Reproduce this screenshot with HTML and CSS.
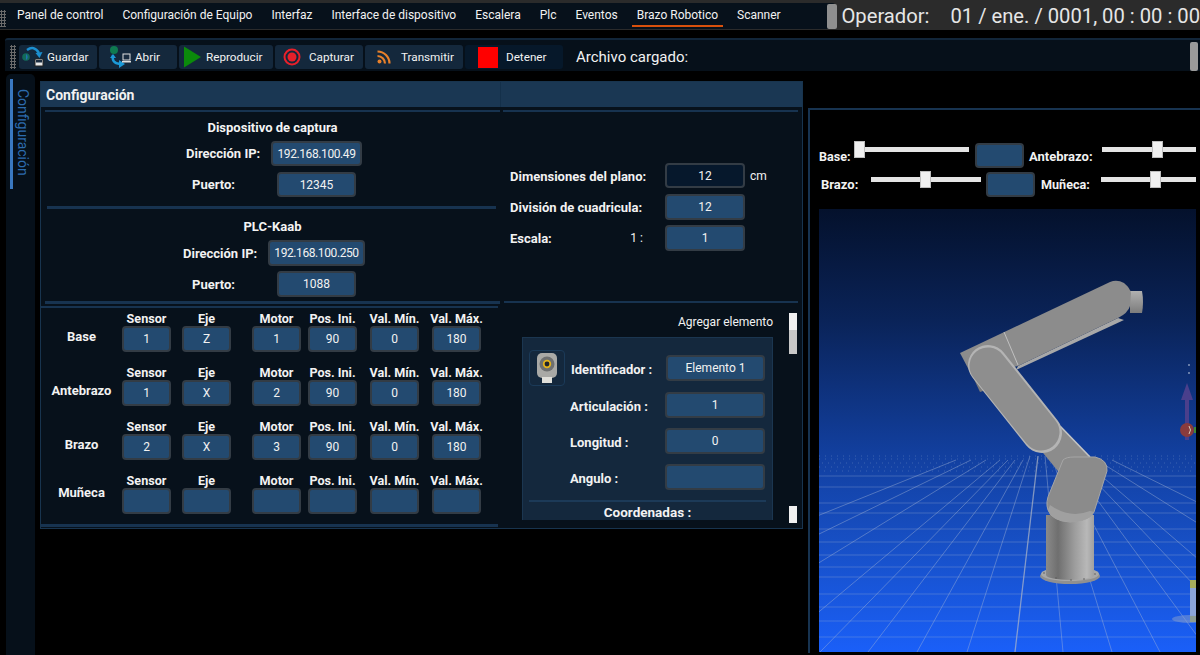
FILE: index.html
```html
<!DOCTYPE html>
<html lang="es">
<head>
<meta charset="utf-8">
<title>Brazo Robotico</title>
<link rel="stylesheet" href="styles.css">
</head>
<body>
<div class="app">
  <header class="topbar">
    <nav class="menu">
      <span class="grip grip-menu"></span>
      <a class="menu-item">Panel de control</a>
      <a class="menu-item">Configuración de Equipo</a>
      <a class="menu-item">Interfaz</a>
      <a class="menu-item">Interface de dispositivo</a>
      <a class="menu-item">Escalera</a>
      <a class="menu-item">Plc</a>
      <a class="menu-item">Eventos</a>
      <a class="menu-item active">Brazo Robotico</a>
      <a class="menu-item">Scanner</a>
      <span class="menu-thumb"></span>
    </nav>
    <div class="operator">
      <span class="op-label">Operador:</span>
      <span class="op-date">01 / ene. / 0001, 00 : 00 : 00</span>
    </div>
  </header>

  <div class="toolbar">
    <span class="grip grip-tool"></span>
    <button class="tool tool-save">
      <svg class="ic" width="26" height="24" viewBox="0 0 26 24"><path d="M6 5 Q13 0 18 8" fill="none" stroke="#1c8fd0" stroke-width="2.4"/><path d="M14.5 8 L21.5 7 L18.5 13 Z" fill="#1c8fd0"/><circle cx="5" cy="12" r="3.8" fill="#126a5a"/><path d="M5 9 A3.5 3.5 0 0 1 5 15 Z" fill="#2270b0"/><rect x="14" y="14" width="8" height="7" fill="#e8e8e8" stroke="#222" stroke-width="1"/><rect x="15" y="15" width="6" height="2.5" fill="#1a2c40"/></svg>
      <span>Guardar</span>
    </button>
    <button class="tool tool-open">
      <svg class="ic" width="24" height="24" viewBox="0 0 24 24"><circle cx="5" cy="5" r="4" fill="#0f7a50"/><path d="M4 10 Q2 18 11 19" fill="none" stroke="#1c9ad8" stroke-width="2.4"/><path d="M10 15 L16 19 L10 23 Z" fill="#1c9ad8"/><path d="M4 9 L1 13 L7 13 Z" fill="#1c9ad8"/><rect x="14" y="9" width="7" height="6" fill="#1a2c40" stroke="#e0e0e0"/><rect x="13" y="16" width="9" height="1.5" fill="#e0e0e0"/></svg>
      <span>Abrir</span>
    </button>
    <button class="tool tool-play">
      <svg class="ic" width="17" height="22" viewBox="0 0 18 22"><path d="M0 0 L18 11 L0 22 Z" fill="#0b8a0b"/></svg>
      <span>Reproducir</span>
    </button>
    <button class="tool tool-cap">
      <svg class="ic" width="18" height="18" viewBox="0 0 18 18"><circle cx="9" cy="9" r="7.5" fill="none" stroke="#e8202a" stroke-width="2"/><circle cx="9" cy="9" r="4.5" fill="#e8202a"/></svg>
      <span>Capturar</span>
    </button>
    <button class="tool tool-rss">
      <svg class="ic" width="14" height="14" viewBox="0 0 14 14"><circle cx="2.5" cy="11.5" r="2" fill="#e8802a"/><path d="M0.5 6 A7.5 7.5 0 0 1 8 13.5 M0.5 1.5 A12 12 0 0 1 12.5 13.5" fill="none" stroke="#e8802a" stroke-width="2.2"/></svg>
      <span>Transmitir</span>
    </button>
    <button class="tool tool-stop">
      <span class="stop-box"></span>
      <span>Detener</span>
    </button>
    <span class="loaded">Archivo cargado:</span>
    <span class="tool-thumb"></span>
  </div>

  <main class="workspace">
    <aside class="rail">
      <div class="rail-tab"><span class="rail-text">Configuración</span></div>
    </aside>

    <section class="panel">
      <div class="panel-head">
        <div class="head-left">Configuración</div>
        <div class="head-right"></div>
      </div>
      <div class="panel-top">
        <div class="conn">
          <div class="rule rule-top"></div>
          <h3 class="conn-title">Dispositivo de captura</h3>
          <div class="field f-a"><label class="lbl">Dirección IP:</label><span class="inp ip w-91">192.168.100.49</span></div>
          <div class="field f-b"><label class="lbl">Puerto:</label><span class="inp w-79">12345</span></div>
          <div class="rule rule-mid"></div>
          <h3 class="conn-title title-2">PLC-Kaab</h3>
          <div class="field f-c"><label class="lbl">Dirección IP:</label><span class="inp ip w-97 h-26">192.168.100.250</span></div>
          <div class="field f-b f-d"><label class="lbl">Puerto:</label><span class="inp w-79 h-26">1088</span></div>
        </div>
        <div class="plane">
          <div class="rule rule-top rule-plane"></div>
          <div class="pfield pf-1"><label class="plbl">Dimensiones del plano:</label><span class="inp inp-dark w-80">12</span><span class="unit">cm</span></div>
          <div class="pfield pf-2"><label class="plbl">División de cuadricula:</label><span class="inp w-80 h-26">12</span></div>
          <div class="pfield pf-2"><label class="plbl">Escala:<span class="ratio">1 :</span></label><span class="inp w-80 h-26">1</span></div>
        </div>
      </div>
      <div class="panel-bottom">
        <div class="joints">
          <div class="rule rule-j1"></div>
          <div class="rule rule-j2"></div>
          <div class="jrow">
            <div class="jname">Base</div>
            <div class="jc c1"><b>Sensor</b><span class="inp w-49 h-26">1</span></div>
            <div class="jc c2"><b>Eje</b><span class="inp w-49 h-26">Z</span></div>
            <div class="jc c3"><b>Motor</b><span class="inp w-49 h-26">1</span></div>
            <div class="jc c4"><b>Pos. Ini.</b><span class="inp w-49 h-26">90</span></div>
            <div class="jc c5"><b>Val. Mín.</b><span class="inp w-49 h-26">0</span></div>
            <div class="jc c6"><b>Val. Máx.</b><span class="inp w-49 h-26">180</span></div>
          </div>
          <div class="jrow">
            <div class="jname">Antebrazo</div>
            <div class="jc c1"><b>Sensor</b><span class="inp w-49 h-26">1</span></div>
            <div class="jc c2"><b>Eje</b><span class="inp w-49 h-26">X</span></div>
            <div class="jc c3"><b>Motor</b><span class="inp w-49 h-26">2</span></div>
            <div class="jc c4"><b>Pos. Ini.</b><span class="inp w-49 h-26">90</span></div>
            <div class="jc c5"><b>Val. Mín.</b><span class="inp w-49 h-26">0</span></div>
            <div class="jc c6"><b>Val. Máx.</b><span class="inp w-49 h-26">180</span></div>
          </div>
          <div class="jrow">
            <div class="jname">Brazo</div>
            <div class="jc c1"><b>Sensor</b><span class="inp w-49 h-26">2</span></div>
            <div class="jc c2"><b>Eje</b><span class="inp w-49 h-26">X</span></div>
            <div class="jc c3"><b>Motor</b><span class="inp w-49 h-26">3</span></div>
            <div class="jc c4"><b>Pos. Ini.</b><span class="inp w-49 h-26">90</span></div>
            <div class="jc c5"><b>Val. Mín.</b><span class="inp w-49 h-26">0</span></div>
            <div class="jc c6"><b>Val. Máx.</b><span class="inp w-49 h-26">180</span></div>
          </div>
          <div class="jrow">
            <div class="jname jname-high">Muñeca</div>
            <div class="jc c1"><b>Sensor</b><span class="inp w-49 h-26"></span></div>
            <div class="jc c2"><b>Eje</b><span class="inp w-49 h-26"></span></div>
            <div class="jc c3"><b>Motor</b><span class="inp w-49 h-26"></span></div>
            <div class="jc c4"><b>Pos. Ini.</b><span class="inp w-49 h-26"></span></div>
            <div class="jc c5"><b>Val. Mín.</b><span class="inp w-49 h-26"></span></div>
            <div class="jc c6"><b>Val. Máx.</b><span class="inp w-49 h-26"></span></div>
          </div>
          <div class="rule rule-j3"></div>
        </div>
        <div class="elements">
          <div class="rule rule-el"></div>
          <div class="el-body">
            <div class="el-list">
              <div class="el-add">Agregar elemento</div>
              <div class="card">
                <div class="card-first">
                  <div class="thumb">
                    <svg width="24" height="32" viewBox="0 0 24 32"><rect x="2" y="1" width="20" height="25" rx="5" fill="#a9a9a6"/><rect x="7" y="25" width="10" height="6" fill="#e0dfda"/><circle cx="12" cy="12" r="7.5" fill="#6d6f70"/><circle cx="12" cy="12" r="4.2" fill="#e2b21c"/><circle cx="12" cy="12" r="2.4" fill="#20242a"/></svg>
                  </div>
                  <label class="clbl lbl-id">Identificador :</label>
                  <span class="inp w-99 h-26">Elemento 1</span>
                </div>
                <div class="crow"><label class="clbl">Articulación :</label><span class="inp w-100 h-26">1</span></div>
                <div class="crow"><label class="clbl">Longitud :</label><span class="inp w-100 h-26">0</span></div>
                <div class="crow"><label class="clbl">Angulo :</label><span class="inp w-100 h-26"></span></div>
                <div class="card-rule"></div>
                <div class="coords">Coordenadas :</div>
              </div>
            </div>
            <div class="vscroll">
              <span class="vs-top"></span><span class="vs-thumb"></span><span class="vs-gap"></span><span class="vs-end"></span>
            </div>
          </div>
        </div>
      </div>
    </section>

    <section class="viewer">
      <div class="sliders">
        <div class="srow srow-1">
          <label class="slbl s-base">Base:</label>
          <div class="slider sl-1"><span class="knob k-0"></span></div>
          <span class="inp w-49 h-25"></span>
          <label class="slbl s-ante">Antebrazo:</label>
          <div class="slider sl-2"><span class="knob k-50"></span></div>
        </div>
        <div class="srow srow-2">
          <label class="slbl s-brazo">Brazo:</label>
          <div class="slider sl-3"><span class="knob k-45"></span></div>
          <span class="inp w-49 h-25"></span>
          <label class="slbl s-muneca">Muñeca:</label>
          <div class="slider sl-4"><span class="knob k-52"></span></div>
        </div>
      </div>
      <svg class="scene" width="377" height="443" viewBox="819 209 377 443">
        <defs>
          <linearGradient id="sky" x1="0" y1="0" x2="0" y2="1">
            <stop offset="0" stop-color="#04112c"/>
            <stop offset=".25" stop-color="#0a2358"/>
            <stop offset=".55" stop-color="#123f9e"/>
            <stop offset=".75" stop-color="#174fc4"/>
            <stop offset="1" stop-color="#1a5ff8"/>
          </linearGradient>
          <linearGradient id="cyl" x1="0" y1="0" x2="1" y2="0">
            <stop offset="0" stop-color="#8a8a8a"/>
            <stop offset=".25" stop-color="#6f6f6f"/>
            <stop offset=".6" stop-color="#9d9d9d"/>
            <stop offset=".85" stop-color="#b8b8b8"/>
            <stop offset="1" stop-color="#a0a0a0"/>
          </linearGradient>
          <linearGradient id="tip" x1="0" y1="0" x2="0" y2="1">
            <stop offset="0" stop-color="#b0b0b0"/>
            <stop offset="1" stop-color="#7c7c7c"/>
          </linearGradient>
        </defs>
        <rect x="819" y="209" width="377" height="443" fill="url(#sky)"/>
        <g stroke="#9db2d8" stroke-opacity=".32" stroke-width="1">
          <path d="M819 476H1196M819 487H1196M819 503H1196M819 513H1196M819 529H1196M819 542H1196M819 555H1196M819 567H1196M819 577H1196M819 594H1196M819 607H1196M819 621H1196M819 637H1196"/>
        </g>
        <g stroke="#a9bcdc" stroke-opacity=".28" stroke-width="1" stroke-dasharray="1 5">
          <path d="M819 456H1196M819 459H1196M822 463H1196M819 467H1196M824 471H1196"/>
        </g>
        <g stroke="#a8b8d6" stroke-opacity=".42" stroke-width="1" fill="none">
          <path d="M1063 652L1045 456M1112 652L1053 460M1160 652L1060 460M1209 652L1068 460M1258 652L1075 460M1306 652L1083 460M1403 652L1097 460M1500 652L1112 460"/>
          <path d="M967 652L1030 456M917 652L1023 460M868 652L1015 460M820 652L1008 460M771 652L1000 460M674 652L986 460M577 652L971 460M480 652L956 460"/>
        </g>
        <path d="M1015 652L1038 456" stroke="#b0b8c8" stroke-width="1.3" opacity=".7"/>
        <rect x="1190" y="580" width="6" height="8" fill="#a8ae5c"/>
        <rect x="1190" y="588" width="6" height="30" fill="#8ca6d8"/>
        <rect x="1190" y="616" width="6" height="6" fill="#8e9a58"/>
        <ellipse cx="1190" cy="619" rx="18" ry="4" fill="#8aa0cc" opacity=".5"/>
        <!-- robot base -->
        <ellipse cx="1070" cy="576" rx="30" ry="8" fill="#909090"/>
        <ellipse cx="1070" cy="574" rx="29" ry="7" fill="#a8a8a8"/>
        <rect x="1046" y="515" width="48" height="60" fill="url(#cyl)"/>
        <ellipse cx="1070" cy="575" rx="24" ry="5" fill="url(#cyl)"/>
        <g fill="#5c5c5c"><circle cx="1044" cy="573" r=".8"/><circle cx="1056" cy="578" r=".8"/><circle cx="1071" cy="580" r=".8"/><circle cx="1084" cy="579" r=".8"/><circle cx="1095" cy="574" r=".8"/></g>
        <!-- lower link -->
        <path d="M1057 423L1090 457L1062 476L1034 442Z" fill="#8c8c8c"/>
        <path d="M1060 426L1090 457" stroke="#c4c4c4" stroke-width="1.6"/>
        <!-- shoulder -->
        <path d="M1063 460Q1066 457 1074 457L1095 457Q1108 460 1107 471L1094 512Q1090 521 1070 522Q1052 521 1048 510Q1045 502 1050 492Z" fill="#8b8b8b" stroke="#a6a6a6" stroke-width="1"/>
        <path d="M1048 510Q1052 521 1070 522Q1090 521 1094 512L1090 511Q1070 519 1050 505Z" fill="#a0a0a0"/>
        <!-- forearm -->
        <path d="M972 375L980 392L986 390L976 370Z" fill="#7a7a7a"/>
        <path d="M1130 291h12q2 11 0 22h-12z" fill="url(#tip)"/>
        <path d="M1118 318L1018 366L1016 370L1124 320Z" fill="#a8a8a8"/>
        <path d="M960 353L1110 282Q1117 279 1124 283Q1130 288 1131 293L1130 306Q1128 313 1118 318L1018 366L1000 370L970 372Z" fill="#8c8c8c"/>
        <path d="M1004 332L1018 365" stroke="#c0c0c0" stroke-width="1"/>
        <!-- upper link capsule -->
        <path d="M988 365L1042 433" stroke="#b4b4b4" stroke-width="40" stroke-linecap="round"/>
        <path d="M988 366L1041 432" stroke="#8e8e8e" stroke-width="37" stroke-linecap="round"/>
        <!-- gizmo -->
        <path d="M1185 440V400H1181L1187 383L1193 400H1189V440Z" fill="#4a3f8c"/>
        <circle cx="1187" cy="430" r="7" fill="#8a3b3d"/>
        <rect x="1194" y="427" width="2" height="6" fill="#3a8a3a"/>
        <path d="M1189 426Q1192 430 1189 434" stroke="#d8c8b8" fill="none"/>
        <path d="M1188 365h2M1188 373h2" stroke="#c0cce0" stroke-width="1"/>
      </svg>
    </section>
  </main>
</div>
</body>
</html>
```
FILE: styles.css
```css
* { box-sizing: border-box; }
html, body { margin: 0; padding: 0; background: #000; }
body { width: 1200px; height: 655px; overflow: hidden; font-family: Roboto, "Noto Sans", sans-serif; font-size: 12px; color: #f2f2f2; }
.app { width: 1200px; height: 655px; overflow: hidden; }

/* top bar */
.topbar { display: flex; height: 30px; background: #2b2b2b; padding-top: 3px; }
.menu { display: flex; align-items: center; width: 838px; height: 26px; background: #07111b; border-radius: 0 3px 3px 0; gap: 19px; padding-left: 17px; position: relative; }
.menu-item { color: #f2f2f2; line-height: 20px; height: 22px; }
.menu-item.active { border-bottom: 2px solid #d8500c; padding: 0 5px; margin: 0 -5px; }
.menu-thumb { position: absolute; left: 827px; top: 1px; width: 10px; height: 25px; background: #8f8f8f; border-radius: 2px; }
.grip { position: absolute; background-image: radial-gradient(circle, #6a6a6a 1px, transparent 1.2px); background-size: 3px 3px; }
.grip-menu { left: 0; top: 7px; width: 6px; height: 17px; }
.operator { flex: 1; display: flex; padding-left: 6px; font-size: 20.2px; line-height: 26px; color: #e6e6e6; }
.op-label { width: 109px; }
.op-date { white-space: nowrap; }

/* toolbar */
.toolbar { position: relative; display: flex; align-items: center; gap: 2px; height: 33px; margin: 8px 0 0 5px; padding: 3px 0 0 14px; background: #06101a; border-top: 2px solid #12263a; border-radius: 3px 0 0 0; }
.grip-tool { left: 5px; top: 5px; width: 6px; height: 24px; }
.tool { display: flex; align-items: center; justify-content: flex-start; height: 24px; border: 0; border-radius: 3px; background: #14283c; color: #f2f2f2; font: 11.7px Roboto, "Noto Sans", sans-serif; padding: 0; }
.ic { flex: none; }
.tool-save { width: 78px; padding-left: 2px; }
.tool-open { width: 78px; padding-left: 10px; gap: 2px; }
.tool-play { width: 94px; padding-left: 5px; gap: 5px; }
.tool-cap { width: 88px; padding-left: 8px; gap: 8px; }
.tool-rss { width: 98px; padding-left: 12px; gap: 10px; }
.tool-stop { width: 98px; padding-left: 13px; gap: 8px; background: #06182a; }
.stop-box { width: 20px; height: 21px; background: #f00; }
.loaded { margin-left: 11px; font-size: 15px; color: #f2f2f2; }
.tool-thumb { position: absolute; left: 1185px; top: 2px; width: 8px; height: 29px; background: #9a9a9a; border-radius: 2px; }

/* workspace */
.workspace { display: flex; height: 584px; margin-top: 3px; }
.rail { width: 29px; margin-left: 6px; background: #06101a; border-radius: 5px 5px 0 0; padding-top: 5px; }
.rail-tab { width: 27px; margin-left: 4px; height: 110px; border-left: 3px solid #3a78c0; }
.rail-text { display: block; writing-mode: vertical-rl; color: #2c6cae; font-size: 14px; margin-left: 2px; padding-top: 10px; line-height: 16px; }

.panel { width: 763px; height: 448px; margin: 7px 0 0 5px; background: #07111b; border: 1px solid #18344e; display: flex; flex-direction: column; }
.panel-head { display: flex; height: 25px; background: #1a3753; flex: none; }
.head-left { width: 460px; padding-left: 5px; font-weight: 700; font-size: 14px; line-height: 27px; border-right: 1px solid #14304a; }
.head-right { flex: 1; }
.panel-top { display: flex; height: 194px; flex: none; }
.panel-bottom { display: flex; flex: 1; }

.rule { height: 2px; background: #173350; }
.rule-top { margin: 3px 0 0 4px; }
.rule-mid { margin: 9px 4px 0 6px; height: 3px; }
.conn { width: 459px; }
.conn-title { margin: 8px 0 0; font-size: 13px; line-height: 16px; font-weight: 700; text-align: center; padding-left: 4px; color: #f4f4f4; }
.title-2 { margin-top: 10px; }
.field { display: flex; align-items: center; margin-top: 5px; }
.f-a { padding-left: 145px; }
.f-b { padding-left: 151px; margin-top: 6px; }
.f-c { padding-left: 142px; }
.f-d { margin-top: 5px; }
.lbl { width: 85px; font-weight: 700; font-size: 13px; }
.inp { display: flex; align-items: center; justify-content: center; height: 25px; background: #234a70; border: 2px solid #333c45; border-radius: 4px; color: #f2f2f2; font-size: 12px; flex: none; }
.ip { letter-spacing: -.4px; }
.inp-dark { background: #06182c; }
.w-49 { width: 49px; }
.w-79 { width: 79px; }
.w-80 { width: 80px; }
.w-91 { width: 91px; }
.w-97 { width: 97px; }
.w-99 { width: 99px; }
.w-100 { width: 100px; }
.h-25 { height: 25px; }
.h-26 { height: 26px; }

.plane { flex: 1; padding-left: 3px; }
.rule-plane { margin-left: 0; margin-right: 4px; }
.pfield { display: flex; align-items: center; padding-left: 7px; }
.pf-1 { margin-top: 51px; }
.pf-1 .plbl { padding-top: 2px; }
.pf-2 { margin-top: 6px; }
.pf-2 + .pf-2 { margin-top: 5px; }
.plbl { width: 155px; font-weight: 700; font-size: 13px; white-space: nowrap; display: flex; }
.ratio { font-weight: 400; font-size: 12px; margin-left: auto; padding-right: 22px; }
.unit { margin-left: 5px; font-size: 12px; }

/* joints */
.joints { width: 459px; }
.rule-j1 { margin: 0 0 0 4px; height: 3px; }
.rule-j2 { margin: 2px 2px 0 0; }
.jrow { display: flex; height: 54px; align-items: flex-start; }
.jname { width: 81px; text-align: center; font-weight: 700; font-size: 13px; padding-top: 21px; line-height: 16px; }
.jname-high { padding-top: 15px; }
.jc { width: 49px; display: flex; flex-direction: column; align-items: center; }
.jc b { display: block; height: 18px; line-height: 21px; font-size: 12.6px; white-space: nowrap; font-weight: 700; }
.c2 { margin-left: 11px; }
.c3 { margin-left: 21px; }
.c4 { margin-left: 7px; }
.c5 { margin-left: 13px; }
.c6 { margin-left: 13px; }
.rule-j3 { margin: 0 2px 0 0; height: 3px; }

/* elements */
.elements { flex: 1; padding-left: 4px; }
.rule-el { margin: 0 4px 0 0; }
.el-body { display: flex; height: 220px; }
.el-list { width: 285px; overflow: hidden; padding-top: 11px; }
.el-add { text-align: right; padding-right: 16px; line-height: 16px; }
.card { height: 183px; margin: 7px 16px 0 18px; background: #14283d; border: 1px solid #1b3650; border-bottom: 0; overflow: hidden; padding: 12px 0 0 6px; }
.card-first { display: flex; align-items: flex-start; }
.thumb { width: 36px; height: 36px; border: 1px solid #1b3a58; border-radius: 4px; display: flex; align-items: center; justify-content: center; flex: none; }
.clbl { font-weight: 700; font-size: 13px; padding-left: 41px; padding-top: 2px; }
.lbl-id { width: 95px; padding-left: 0; margin: 10px 0 0 6px; flex: none; }
.card-first .inp { margin-top: 5px; }
.crow { display: flex; align-items: center; margin-top: 10px; }
.card-first + .crow { margin-top: 6px; }
.crow .clbl { width: 136px; flex: none; }
.card-rule { height: 2px; margin: 10px 6px 0 0; background: #1c3a58; }
.coords { font-weight: 700; font-size: 13.5px; text-align: center; margin-top: 2px; line-height: 16px; padding-right: 6px; }
.vscroll { width: 8px; display: flex; flex-direction: column; padding-top: 10px; }
.vs-top { height: 17px; background: #f0f0f0; }
.vs-thumb { height: 24px; background: #c8c8c8; }
.vs-gap { height: 152px; }
.vs-end { height: 17px; background: #f0f0f0; }

/* viewer */
.viewer { width: 392px; height: 545px; margin: 34px 0 0 5px; border-top: 2px solid #173350; border-left: 2px solid #173350; background: #000; padding-left: 9px; display: flex; flex-direction: column; }
.sliders { height: 99px; }
.srow { display: flex; align-items: flex-start; }
.srow-1 { padding-top: 33px; height: 60px; }
.srow-2 { height: 30px; margin-top: 2px; }
.slbl { font-weight: 700; font-size: 12.6px; white-space: nowrap; flex: none; }
.s-base { width: 35px; margin-top: 6px; }
.s-ante { margin: 6px 0 0 5px; width: 73px; font-size: 13px; }
.s-brazo { width: 50px; margin: 5px 0 0 2px; font-size: 13px; }
.s-muneca { margin: 5px 0 0 6px; width: 60px; }
.slider { position: relative; height: 5px; background: #e4e4e4; flex: none; margin-top: 4px; }
.sl-1 { width: 115px; margin-right: 6px; }
.sl-2 { width: 94px; }
.sl-3 { width: 110px; margin-right: 5px; margin-top: 5px; }
.sl-4 { width: 95px; margin-top: 5px; }
.knob { position: absolute; top: -6px; width: 11px; height: 17px; background: #f0f0f0; border: 1px solid #bdbdbd; }
.k-0 { left: 0; }
.k-50 { left: 50px; }
.k-45 { left: 49px; }
.k-52 { left: 49px; }
.scene { display: block; flex: none; }
```
